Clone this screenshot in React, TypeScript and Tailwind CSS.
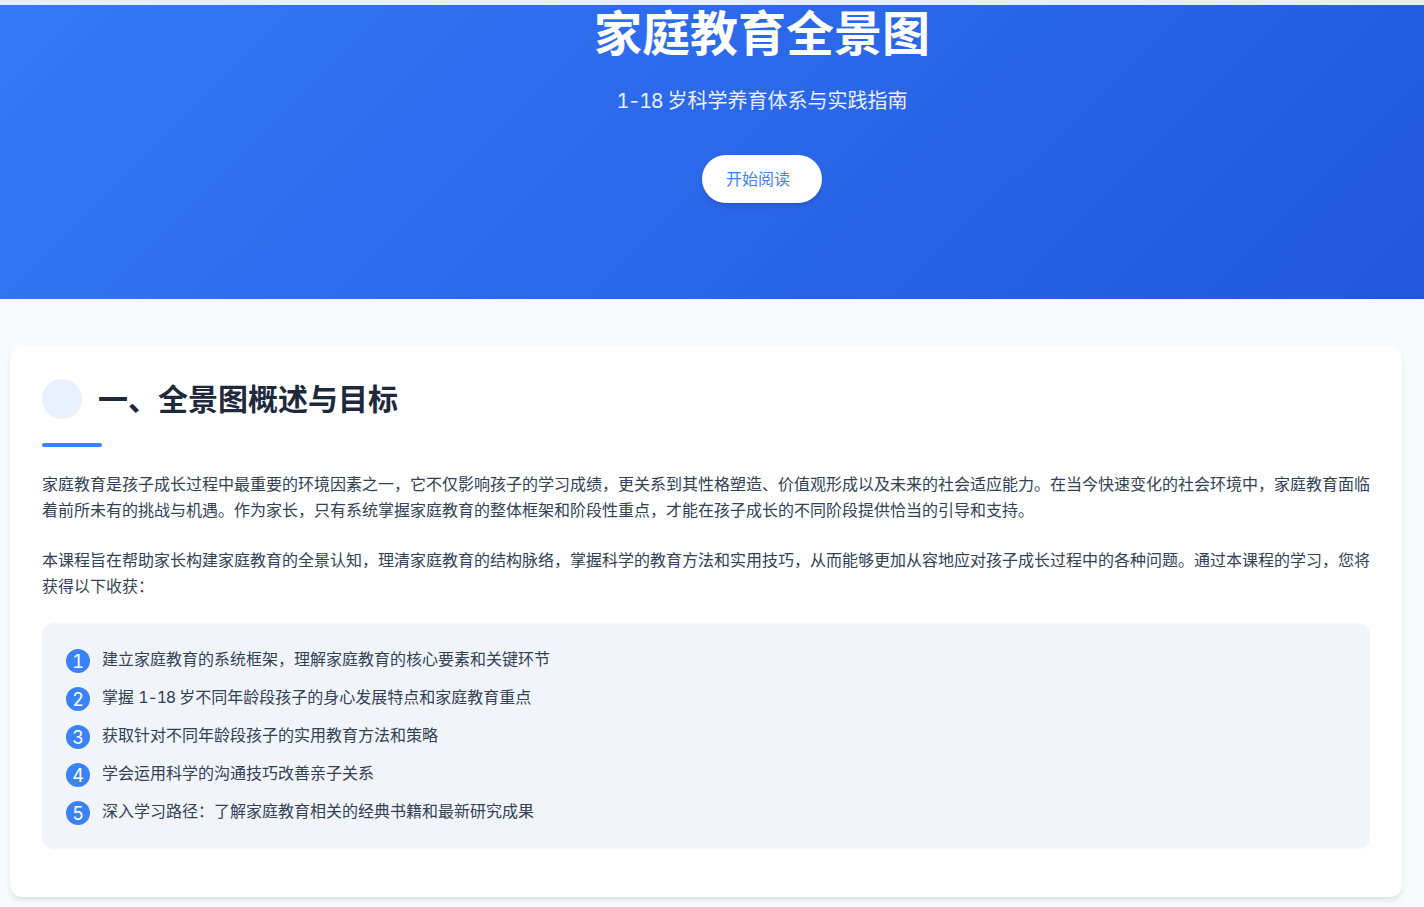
const goals = [
  "建立家庭教育的系统框架，理解家庭教育的核心要素和关键环节",
  <>掌握 <span className="tracking-[-0.075em]">1-18</span> 岁不同年龄段孩子的身心发展特点和家庭教育重点</>,
  "获取针对不同年龄段孩子的实用教育方法和策略",
  "学会运用科学的沟通技巧改善亲子关系",
  "深入学习路径：了解家庭教育相关的经典书籍和最新研究成果",
]

export default function App() {
  return (
    <div className="min-h-[907px] bg-[#f8fafc] pt-[5px] font-['Inter','Noto_Sans_CJK_SC',sans-serif] tabular-nums text-[#334155]">
      <div className="absolute left-0 top-0 h-[5px] w-full bg-[#e8effc]" />

      {/* Hero */}
      <header className="flex h-[294px] flex-col items-center bg-[linear-gradient(135deg,#3579f6,#2157dd)] pl-[100px] text-white">
        <h1 className="text-[48px] font-bold leading-[58px]">家庭教育全景图</h1>
        <p className="mt-[23px] text-[20px] leading-[30px] opacity-90">
          <span className="tracking-[-0.075em]">1-18</span> 岁科学养育体系与实践指南
        </p>
        <button className="mt-[39px] flex h-12 w-[120px] items-center rounded-full bg-white pl-6 text-base text-[#3b82f6] shadow-[0_4px_6px_-1px_rgba(0,0,0,0.1),0_2px_4px_-2px_rgba(0,0,0,0.1)]">
          开始阅读
        </button>
      </header>

      {/* Overview */}
      <main className="pb-[10px] pl-[10px] pr-[22px] pt-12">
        <section className="rounded-xl bg-white p-8 pb-12 shadow-[0_4px_6px_-1px_rgba(0,0,0,0.1),0_2px_4px_-2px_rgba(0,0,0,0.05)]">
          <div className="flex items-center gap-4">
            <div className="h-10 w-10 rounded-full bg-[#eaf1fe]" />
            <h2 className="text-[30px] font-bold leading-10 text-[#1e293b]">一、全景图概述与目标</h2>
          </div>
          <div className="mb-6 mt-6 h-1 w-[60px] rounded-sm bg-[#3b82f6]" />

          <p className="mb-6 text-base leading-[26px]">
            家庭教育是孩子成长过程中最重要的环境因素之一，它不仅影响孩子的学习成绩，更关系到其性格塑造、价值观形成以及未来的社会适应能力。在当今快速变化的社会环境中，家庭教育面临着前所未有的挑战与机遇。作为家长，只有系统掌握家庭教育的整体框架和阶段性重点，才能在孩子成长的不同阶段提供恰当的引导和支持。
          </p>
          <p className="mb-6 text-base leading-[26px]">
            本课程旨在帮助家长构建家庭教育的全景认知，理清家庭教育的结构脉络，掌握科学的教育方法和实用技巧，从而能够更加从容地应对孩子成长过程中的各种问题。通过本课程的学习，您将获得以下收获：
          </p>

          <ul className="flex flex-col gap-3 rounded-xl bg-[#f1f5f9] p-6">
            {goals.map((goal, i) => (
              <li key={i} className="flex h-[26px] gap-3 text-base leading-[26px]">
                <span className="mt-[2px] flex h-6 w-6 shrink-0 items-center justify-center rounded-full bg-[#3b82f6] pt-px text-[18px] text-white">
                  {i + 1}
                </span>
                <span className="-mt-px">{goal}</span>
              </li>
            ))}
          </ul>
        </section>
      </main>
    </div>
  )
}
